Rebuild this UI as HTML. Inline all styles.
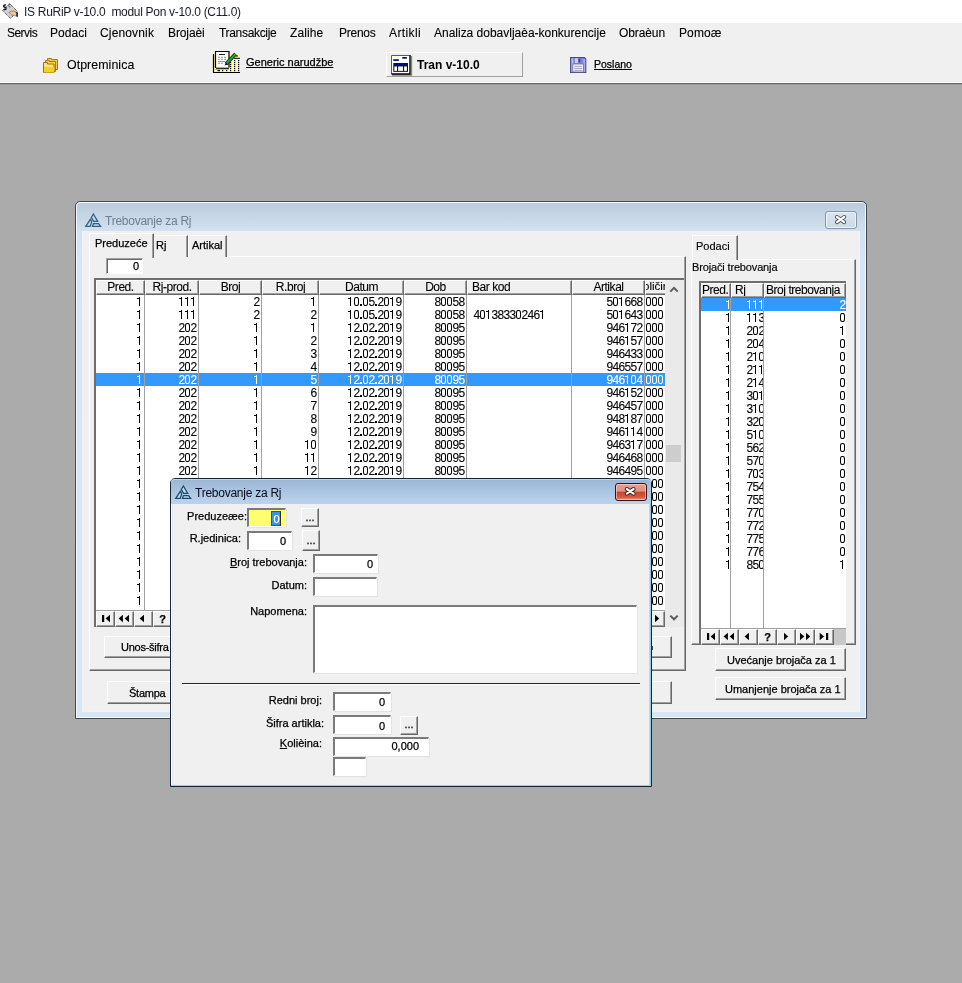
<!DOCTYPE html>
<html><head><meta charset="utf-8"><style>
html,body{margin:0;padding:0;width:962px;height:983px;overflow:hidden;background:#ababab}
body{position:relative;will-change:transform;font-family:"Liberation Sans",sans-serif;color:#000}
div,svg{position:absolute;box-sizing:border-box}
.t{white-space:nowrap;-webkit-text-stroke:0.25px currentColor}
.d{font-size:12px;line-height:11px;-webkit-text-stroke:0.1px currentColor}
.d i{display:inline-block;width:6px;text-align:left;font-style:normal;text-indent:-0.6px}
.d i.o,.d i.p,.d i.z{position:relative;height:9px}
.d i.z::before{content:'';position:absolute;left:0;top:0;width:5px;height:9px;border:1px solid currentColor;border-radius:2px/3px;box-sizing:border-box}
.d i.p{width:3px;height:2px}
.d i.o::before{content:'';position:absolute;left:2px;top:0;width:1px;height:9px;background:currentColor}
.d i.o::after{content:'';position:absolute;left:0;top:1px;width:2px;height:1px;background:currentColor}
.d i.p::before{content:'';position:absolute;left:0;top:0.4px;width:1.6px;height:1.6px;background:currentColor}
</style></head><body>
<div style="left:0px;top:0px;width:962px;height:23px;background:#fff"></div>
<div style="left:0px;top:23px;width:962px;height:59px;background:#f0f0f0"></div>
<div style="left:0px;top:82px;width:962px;height:1px;background:#fff"></div>
<div style="left:0px;top:83px;width:962px;height:1px;background:#6a6a6a"></div>
<div style="left:0px;top:84px;width:962px;height:1px;background:#9a9a9a"></div>
<div style="left:0px;top:85px;width:962px;height:898px;background:#ababab"></div>
<svg style="left:0px;top:0px" width="22" height="22" viewBox="0 0 22 22">
<path d="M9.5 3.5 L17.5 11.5 L10.5 18.5 L2.5 10.5 Z" fill="#cfcfd4" stroke="#404048" stroke-width="1" stroke-dasharray="1.2 0.8"/>
<path d="M6 5 Q4 4.5 3.5 6 Q3.5 7 5 7.3 Q6.3 7.6 6 9 Q5.5 10 3.5 9.5" stroke="#111" stroke-width="1.4" fill="none"/>
<path d="M11 4.5 Q9 4 8.5 5.5 Q8.5 7 10.5 7" stroke="#666" stroke-width="1" fill="none"/>
<path d="M9 12.5 Q11 10.5 14 11 L16 12 L17 16 L13 15.5 Q11 15 9 12.5Z" fill="#e9c9a0" stroke="#8a6a40" stroke-width="0.7"/>
<path d="M16.5 12 L17.8 12.5 L17.8 17 L16.5 16.5Z" fill="#000"/>
<path d="M12 11.5 h3" stroke="#c8a040" stroke-width="1.2"/>
</svg>
<div class="t" style="left:24px;top:6px;font-size:12px;line-height:12px;color:#1a1a2a;letter-spacing:-0.3px;-webkit-text-stroke:0">IS RuRiP v-10.0&nbsp; modul Pon v-10.0 (C11.0)</div>
<div class="t" style="left:7px;top:27px;font-size:12px;line-height:12px;letter-spacing:-0.53px;-webkit-text-stroke:0.1px currentColor">Servis</div>
<div class="t" style="left:50px;top:27px;font-size:12px;line-height:12px;letter-spacing:0.06px;-webkit-text-stroke:0.1px currentColor">Podaci</div>
<div class="t" style="left:100px;top:27px;font-size:12px;line-height:12px;letter-spacing:0.15px;-webkit-text-stroke:0.1px currentColor">Cjenovnik</div>
<div class="t" style="left:168px;top:27px;font-size:12px;line-height:12px;letter-spacing:-0.11px;-webkit-text-stroke:0.1px currentColor">Brojaèi</div>
<div class="t" style="left:219px;top:27px;font-size:12px;line-height:12px;letter-spacing:-0.32px;-webkit-text-stroke:0.1px currentColor">Transakcije</div>
<div class="t" style="left:290px;top:27px;font-size:12px;line-height:12px;letter-spacing:0.10px;-webkit-text-stroke:0.1px currentColor">Zalihe</div>
<div class="t" style="left:339px;top:27px;font-size:12px;line-height:12px;letter-spacing:-0.26px;-webkit-text-stroke:0.1px currentColor">Prenos</div>
<div class="t" style="left:389px;top:27px;font-size:12px;line-height:12px;letter-spacing:0.39px;-webkit-text-stroke:0.1px currentColor">Artikli</div>
<div class="t" style="left:434px;top:27px;font-size:12px;line-height:12px;letter-spacing:-0.01px;-webkit-text-stroke:0.1px currentColor">Analiza dobavljaèa-konkurencije</div>
<div class="t" style="left:619px;top:27px;font-size:12px;line-height:12px;letter-spacing:-0.10px;-webkit-text-stroke:0.1px currentColor">Obraèun</div>
<div class="t" style="left:679px;top:27px;font-size:12px;line-height:12px;letter-spacing:0.10px;-webkit-text-stroke:0.1px currentColor">Pomoæ</div>
<svg style="left:42px;top:57px" width="18" height="17" viewBox="0 0 18 17">
<path d="M5.5 1.5 h4 v1 h6 v10 h-10 z" fill="#f7c948" stroke="#b07810"/>
<path d="M3.5 3.5 h4 v1 h6 v10 h-10 z" fill="#f9d35a" stroke="#b07810"/>
<path d="M1.5 5.5 h4 v1.5 h6.5 v8.5 h-10.5 z" fill="#fbe27a" stroke="#a86c08"/>
<path d="M2 10 h10 v5.5 h-10z" fill="#f2cf2a"/>
</svg>
<div class="t" style="left:67px;top:59px;font-size:12.4px;line-height:12.4px;letter-spacing:0.05px;-webkit-text-stroke:0.1px currentColor">Otpreminica</div>
<svg style="left:205px;top:45px" width="40" height="35" viewBox="0 0 40 35">
<path d="M8 9 H35 V28 H8 Z" fill="#fff9a0"/>
<path d="M8.5 9 V27.5 H35" stroke="#000" stroke-width="1.2" fill="none"/>
<path d="M29 13.3 H35" stroke="#000" stroke-width="1"/>
<path d="M31 11 H33" stroke="#000" stroke-width="1"/>
<g fill="#000"><rect x="25.0" y="15.0" width="1.2" height="1.2"/><rect x="25.0" y="17.0" width="1.2" height="1.2"/><rect x="25.0" y="19.0" width="1.2" height="1.2"/><rect x="25.0" y="21.0" width="1.2" height="1.2"/><rect x="25.0" y="23.0" width="1.2" height="1.2"/><rect x="25.0" y="25.0" width="1.2" height="1.2"/><rect x="29.0" y="15.0" width="1.2" height="1.2"/><rect x="29.0" y="17.0" width="1.2" height="1.2"/><rect x="29.0" y="19.0" width="1.2" height="1.2"/><rect x="29.0" y="21.0" width="1.2" height="1.2"/><rect x="29.0" y="23.0" width="1.2" height="1.2"/><rect x="29.0" y="25.0" width="1.2" height="1.2"/><rect x="33.0" y="15.0" width="1.2" height="1.2"/><rect x="33.0" y="17.0" width="1.2" height="1.2"/><rect x="33.0" y="19.0" width="1.2" height="1.2"/><rect x="33.0" y="21.0" width="1.2" height="1.2"/><rect x="33.0" y="23.0" width="1.2" height="1.2"/><rect x="33.0" y="25.0" width="1.2" height="1.2"/><rect x="17.0" y="25.0" width="1.2" height="1.2"/><rect x="21.0" y="25.0" width="1.2" height="1.2"/><rect x="12.5" y="25" width="2.5" height="1.2"/></g>
<rect x="10.5" y="6.5" width="13" height="16" fill="#fff"/>
<path d="M10.5 23 V6.5 H24 V22.5" stroke="#000" stroke-width="1.2" fill="none"/>
<path d="M11 23.3 H24" stroke="#222" stroke-width="1.3"/>
<path d="M10 24.5 H24" stroke="#bbb" stroke-width="1"/>
<path d="M14 9.5 H20" stroke="#222" stroke-width="1"/>
<path d="M13 12.3 h2 M16 12.3 h2 M19 12.3 h2 M13 14.3 h2 M16 14.3 h2 M19 14.3 h2 M13 16.5 h7 M13 18.3 h2 M16 18.3 h2" stroke="#888" stroke-width="0.9"/>
<path d="M21 19 L30.5 9" stroke="#111" stroke-width="3.6"/>
<path d="M21.5 18.5 L30.5 9" stroke="#2aa040" stroke-width="2.2"/>
<path d="M19.5 20.5 L21 18 L22.5 19.5Z" fill="#000"/>
</svg>
<div class="t" style="left:246px;top:57px;font-size:11px;line-height:11px;text-decoration:underline">Generic narudžbe</div>
<div style="left:386px;top:52px;width:137px;height:25px;background:#f0f0f0;border-top:1px solid #fff;border-left:1px solid #fff;border-right:1px solid #a0a0a0;border-bottom:1px solid #a0a0a0"></div>
<svg style="left:386px;top:50px" width="30" height="28" viewBox="0 0 30 28">
<path d="M6 25 H25.5 V6" stroke="#8a8080" stroke-width="1.3" fill="none"/>
<rect x="5.5" y="5.5" width="18.5" height="18.5" fill="#fff"/>
<path d="M5.5 24 V5.5 H23.5" stroke="#5a5a5a" stroke-width="1" fill="none"/>
<path d="M24 5 V24 H5.5" stroke="#000" stroke-width="1.4" fill="none"/>
<rect x="7.3" y="9.2" width="5.5" height="1.7" fill="#000a60"/>
<rect x="16.3" y="7" width="4.5" height="1.7" fill="#000a60"/>
<rect x="7.3" y="13" width="14.7" height="3" fill="#000a80"/>
<rect x="7.3" y="16" width="14.7" height="5.8" fill="#000"/>
<rect x="8.3" y="16.4" width="2.8" height="4.5" fill="#fff"/>
<rect x="12.1" y="16.4" width="5" height="4.5" fill="#f4f0f0"/>
<rect x="18.1" y="16.4" width="2.8" height="4.5" fill="#fff"/>
</svg>
<div class="t" style="left:417px;top:59px;font-size:12px;line-height:12px;font-weight:bold;-webkit-text-stroke:0">Tran v-10.0</div>
<svg style="left:566px;top:54px" width="24" height="22" viewBox="0 0 24 22">
<path d="M4.6 3.6 H18.3 L19.8 5 V18.5 H4.6 Z" fill="#8c92e0" stroke="#4a4a80" stroke-width="1.1"/>
<rect x="5.5" y="4.3" width="1.6" height="13.5" fill="#b8bcf4"/>
<rect x="17.5" y="5" width="1.6" height="13" fill="#a8acf0"/>
<rect x="8.5" y="4.2" width="8" height="5.2" fill="#7a80d8"/>
<rect x="9" y="4.2" width="3" height="4.8" fill="#c8ccf8"/>
<rect x="12.6" y="4.8" width="1.6" height="3.6" fill="#3a40a0"/>
<rect x="6.8" y="10" width="10.7" height="8" fill="#f4f4fc" stroke="#6a6a98" stroke-width="0.8"/>
<path d="M8.2 12.3 H16.2 M8.2 14.4 H16.2 M8.2 16.4 H16.2" stroke="#9a9ab0" stroke-width="0.9"/>
</svg>
<div class="t" style="left:594px;top:59px;font-size:10.5px;line-height:10.5px;text-decoration:underline">Poslano</div>
<div style="left:75px;top:201px;width:792px;height:518px;border:1px solid #404850;border-radius:5px 5px 0 0;background:linear-gradient(#b9cbdc 0px,#c0d1e1 8px,#d4e2f0 30px,#d8e5f2 60px,#d9e6f3 100%);box-shadow:inset 1px 1px 0 #f4f8fc,inset -1px -1px 0 #f4f8fc"></div>
<div style="left:83px;top:232px;width:776px;height:479px;background:#f0f0f0;box-shadow:0 0 0 1px #eef3f9"></div>
<svg style="left:82px;top:210px;opacity:0.85" width="22" height="20" viewBox="0 0 22 20">
<g fill="#b4def6" stroke="#1d4a6b" stroke-width="1.25" stroke-linejoin="miter">
<path d="M11.4 4 L15.7 11.4 L11.6 11.4 L9.3 7.4 Z"/>
<path d="M8.4 9.3 L9.7 11.9 L8.2 16.4 L3.7 16.4 Z"/>
<path d="M11.4 13.6 L16.6 13.6 L18.7 16.4 L10.4 16.4 Z"/>
</g>
</svg>
<div class="t" style="left:105px;top:215px;font-size:12px;line-height:12px;color:#6e7f92;letter-spacing:-0.25px;-webkit-text-stroke:0">Trebovanje za Rj</div>
<div style="left:825px;top:211px;width:32px;height:18px;border:1px solid #8795a8;border-radius:3px;background:linear-gradient(#dbe5f0,#cdd9e6);box-shadow:inset 0 0 0 1px #eef3f8"></div>
<svg style="left:833px;top:213px" width="16" height="13" viewBox="0 0 16 13">
<path d="M4 4 L11.2 9.2 M11.2 4 L4 9.2" stroke="#404854" stroke-width="4" stroke-linecap="round"/>
<path d="M4 4 L11.2 9.2 M11.2 4 L4 9.2" stroke="#fff" stroke-width="2.2" stroke-linecap="round"/>
</svg>
<div style="left:89px;top:256px;width:597px;height:415px;background:#f0f0f0;border-top:1px solid #fff;border-left:1px solid #fff;border-right:1px solid #696969;border-bottom:1px solid #696969;box-shadow:inset -1px -1px 0 #a0a0a0"></div>
<div style="left:153px;top:235px;width:35px;height:22px;background:#f0f0f0;border-top:1px solid #fff;border-right:1px solid #696969;box-shadow:inset -1px 0 0 #a0a0a0"></div>
<div style="left:188px;top:235px;width:39px;height:22px;background:#f0f0f0;border-top:1px solid #fff;border-left:1px solid #fff;border-right:1px solid #696969;box-shadow:inset -1px 0 0 #a0a0a0"></div>
<div style="left:89px;top:233px;width:65px;height:25px;background:#f0f0f0;border-top:1px solid #fff;border-left:1px solid #fff;border-right:1px solid #696969;box-shadow:inset -1px 0 0 #a0a0a0"></div>
<div class="t" style="left:95px;top:238px;font-size:11px;line-height:11px;">Preduzeće</div>
<div class="t" style="left:156px;top:240px;font-size:11px;line-height:11px;">Rj</div>
<div class="t" style="left:192px;top:240px;font-size:11px;line-height:11px;">Artikal</div>
<div style="left:106px;top:258px;width:37px;height:16px;background:#fff;border-top:1px solid #a0a0a0;border-left:1px solid #a0a0a0;border-right:1px solid #fff;border-bottom:1px solid #fff;box-shadow:inset 1px 1px 0 #696969"></div>
<div class="t" style="left:106px;top:261px;width:33px;text-align:right;font-size:11px;line-height:11px;">0</div>
<div style="left:94px;top:278px;width:590px;height:349px;background:#fff;border-top:2px solid #6e6e6e;border-left:2px solid #6e6e6e"></div>
<div style="left:96px;top:280px;width:49px;height:15px;background:#f0f0f0;border-top:1px solid #fff;border-left:1px solid #fff;border-bottom:1px solid #696969;border-right:1px solid #696969;box-shadow:inset -1px -1px 0 #a0a0a0"></div>
<div class="t" style="left:96px;top:281px;width:49px;text-align:center;font-size:12px;line-height:12px;overflow:hidden;white-space:nowrap;letter-spacing:-0.45px;-webkit-text-stroke:0.1px currentColor">Pred.</div>
<div style="left:145px;top:280px;width:54px;height:15px;background:#f0f0f0;border-top:1px solid #fff;border-left:1px solid #fff;border-bottom:1px solid #696969;border-right:1px solid #696969;box-shadow:inset -1px -1px 0 #a0a0a0"></div>
<div class="t" style="left:145px;top:281px;width:54px;text-align:center;font-size:12px;line-height:12px;overflow:hidden;white-space:nowrap;letter-spacing:-0.45px;-webkit-text-stroke:0.1px currentColor">Rj-prod.</div>
<div style="left:199px;top:280px;width:63px;height:15px;background:#f0f0f0;border-top:1px solid #fff;border-left:1px solid #fff;border-bottom:1px solid #696969;border-right:1px solid #696969;box-shadow:inset -1px -1px 0 #a0a0a0"></div>
<div class="t" style="left:199px;top:281px;width:63px;text-align:center;font-size:12px;line-height:12px;overflow:hidden;white-space:nowrap;letter-spacing:-0.45px;-webkit-text-stroke:0.1px currentColor">Broj</div>
<div style="left:262px;top:280px;width:57px;height:15px;background:#f0f0f0;border-top:1px solid #fff;border-left:1px solid #fff;border-bottom:1px solid #696969;border-right:1px solid #696969;box-shadow:inset -1px -1px 0 #a0a0a0"></div>
<div class="t" style="left:262px;top:281px;width:57px;text-align:center;font-size:12px;line-height:12px;overflow:hidden;white-space:nowrap;letter-spacing:-0.45px;-webkit-text-stroke:0.1px currentColor">R.broj</div>
<div style="left:319px;top:280px;width:85px;height:15px;background:#f0f0f0;border-top:1px solid #fff;border-left:1px solid #fff;border-bottom:1px solid #696969;border-right:1px solid #696969;box-shadow:inset -1px -1px 0 #a0a0a0"></div>
<div class="t" style="left:319px;top:281px;width:85px;text-align:center;font-size:12px;line-height:12px;overflow:hidden;white-space:nowrap;letter-spacing:-0.45px;-webkit-text-stroke:0.1px currentColor">Datum</div>
<div style="left:404px;top:280px;width:63px;height:15px;background:#f0f0f0;border-top:1px solid #fff;border-left:1px solid #fff;border-bottom:1px solid #696969;border-right:1px solid #696969;box-shadow:inset -1px -1px 0 #a0a0a0"></div>
<div class="t" style="left:404px;top:281px;width:63px;text-align:center;font-size:12px;line-height:12px;overflow:hidden;white-space:nowrap;letter-spacing:-0.45px;-webkit-text-stroke:0.1px currentColor">Dob</div>
<div style="left:467px;top:280px;width:105px;height:15px;background:#f0f0f0;border-top:1px solid #fff;border-left:1px solid #fff;border-bottom:1px solid #696969;border-right:1px solid #696969;box-shadow:inset -1px -1px 0 #a0a0a0"></div>
<div class="t" style="left:472px;top:281px;width:99px;font-size:12px;line-height:12px;overflow:hidden;white-space:nowrap;letter-spacing:-0.45px;-webkit-text-stroke:0.1px currentColor">Bar kod</div>
<div style="left:572px;top:280px;width:73px;height:15px;background:#f0f0f0;border-top:1px solid #fff;border-left:1px solid #fff;border-bottom:1px solid #696969;border-right:1px solid #696969;box-shadow:inset -1px -1px 0 #a0a0a0"></div>
<div class="t" style="left:572px;top:281px;width:73px;text-align:center;font-size:12px;line-height:12px;overflow:hidden;white-space:nowrap;letter-spacing:-0.45px;-webkit-text-stroke:0.1px currentColor">Artikal</div>
<div style="left:645px;top:280px;width:20px;height:15px;background:#f0f0f0;border-top:1px solid #fff;border-left:1px solid #fff;border-bottom:1px solid #696969;box-shadow:inset 0 -1px 0 #a0a0a0"></div>
<div class="t" style="left:646px;top:281px;width:19px;height:12px;overflow:hidden;font-size:11.5px;line-height:11px;-webkit-text-stroke:0.1px currentColor"><span style="position:absolute;left:-3px;top:0">oličin</span></div>
<div style="left:665px;top:280px;width:19px;height:347px;background:#eaeaea"></div>
<svg style="left:668px;top:285px" width="12" height="9" viewBox="0 0 12 9"><path d="M2.3 6.6 L6 2.9 L9.7 6.6" stroke="#5a5a5a" stroke-width="2" fill="none"/></svg>
<div style="left:666px;top:445px;width:15px;height:17px;background:#cdcdcd"></div>
<svg style="left:668px;top:613px" width="12" height="9" viewBox="0 0 12 9"><path d="M2.3 2.6 L6 6.3 L9.7 2.6" stroke="#5a5a5a" stroke-width="2" fill="none"/></svg>
<div style="left:96px;top:295px;width:569px;height:315px;overflow:hidden">
<div class="t d" style="left:0px;top:2px;width:47px;text-align:right;color:#000"><i class="o"></i></div>
<div class="t d" style="left:49px;top:2px;width:52px;text-align:right;color:#000"><i class="o"></i><i class="o"></i><i class="o"></i></div>
<div class="t d" style="left:103px;top:2px;width:61px;text-align:right;color:#000"><i>2</i></div>
<div class="t d" style="left:166px;top:2px;width:55px;text-align:right;color:#000"><i class="o"></i></div>
<div class="t d" style="left:223px;top:2px;width:83px;text-align:right;color:#000"><i class="o"></i><i class="z"></i><i class="p"></i><i class="z"></i><i>5</i><i class="p"></i><i>2</i><i class="z"></i><i class="o"></i><i>9</i></div>
<div class="t d" style="left:308px;top:2px;width:61px;text-align:right;color:#000"><i>8</i><i class="z"></i><i class="z"></i><i>5</i><i>8</i></div>
<div class="t d" style="left:476px;top:2px;width:71px;text-align:right;color:#000"><i>5</i><i class="z"></i><i class="o"></i><i>6</i><i>6</i><i>8</i></div>
<div class="t d" style="left:550px;top:2px;color:#000"><i class="z"></i><i class="z"></i><i class="z"></i></div>
<div class="t d" style="left:0px;top:15px;width:47px;text-align:right;color:#000"><i class="o"></i></div>
<div class="t d" style="left:49px;top:15px;width:52px;text-align:right;color:#000"><i class="o"></i><i class="o"></i><i class="o"></i></div>
<div class="t d" style="left:103px;top:15px;width:61px;text-align:right;color:#000"><i>2</i></div>
<div class="t d" style="left:166px;top:15px;width:55px;text-align:right;color:#000"><i>2</i></div>
<div class="t d" style="left:223px;top:15px;width:83px;text-align:right;color:#000"><i class="o"></i><i class="z"></i><i class="p"></i><i class="z"></i><i>5</i><i class="p"></i><i>2</i><i class="z"></i><i class="o"></i><i>9</i></div>
<div class="t d" style="left:308px;top:15px;width:61px;text-align:right;color:#000"><i>8</i><i class="z"></i><i class="z"></i><i>5</i><i>8</i></div>
<div class="t d" style="left:378px;top:15px;color:#000"><i>4</i><i class="z"></i><i class="o"></i><i>3</i><i>8</i><i>3</i><i>3</i><i class="z"></i><i>2</i><i>4</i><i>6</i><i class="o"></i></div>
<div class="t d" style="left:476px;top:15px;width:71px;text-align:right;color:#000"><i>5</i><i class="z"></i><i class="o"></i><i>6</i><i>4</i><i>3</i></div>
<div class="t d" style="left:550px;top:15px;color:#000"><i class="z"></i><i class="z"></i><i class="z"></i></div>
<div class="t d" style="left:0px;top:28px;width:47px;text-align:right;color:#000"><i class="o"></i></div>
<div class="t d" style="left:49px;top:28px;width:52px;text-align:right;color:#000"><i>2</i><i class="z"></i><i>2</i></div>
<div class="t d" style="left:103px;top:28px;width:61px;text-align:right;color:#000"><i class="o"></i></div>
<div class="t d" style="left:166px;top:28px;width:55px;text-align:right;color:#000"><i class="o"></i></div>
<div class="t d" style="left:223px;top:28px;width:83px;text-align:right;color:#000"><i class="o"></i><i>2</i><i class="p"></i><i class="z"></i><i>2</i><i class="p"></i><i>2</i><i class="z"></i><i class="o"></i><i>9</i></div>
<div class="t d" style="left:308px;top:28px;width:61px;text-align:right;color:#000"><i>8</i><i class="z"></i><i class="z"></i><i>9</i><i>5</i></div>
<div class="t d" style="left:476px;top:28px;width:71px;text-align:right;color:#000"><i>9</i><i>4</i><i>6</i><i class="o"></i><i>7</i><i>2</i></div>
<div class="t d" style="left:550px;top:28px;color:#000"><i class="z"></i><i class="z"></i><i class="z"></i></div>
<div class="t d" style="left:0px;top:41px;width:47px;text-align:right;color:#000"><i class="o"></i></div>
<div class="t d" style="left:49px;top:41px;width:52px;text-align:right;color:#000"><i>2</i><i class="z"></i><i>2</i></div>
<div class="t d" style="left:103px;top:41px;width:61px;text-align:right;color:#000"><i class="o"></i></div>
<div class="t d" style="left:166px;top:41px;width:55px;text-align:right;color:#000"><i>2</i></div>
<div class="t d" style="left:223px;top:41px;width:83px;text-align:right;color:#000"><i class="o"></i><i>2</i><i class="p"></i><i class="z"></i><i>2</i><i class="p"></i><i>2</i><i class="z"></i><i class="o"></i><i>9</i></div>
<div class="t d" style="left:308px;top:41px;width:61px;text-align:right;color:#000"><i>8</i><i class="z"></i><i class="z"></i><i>9</i><i>5</i></div>
<div class="t d" style="left:476px;top:41px;width:71px;text-align:right;color:#000"><i>9</i><i>4</i><i>6</i><i class="o"></i><i>5</i><i>7</i></div>
<div class="t d" style="left:550px;top:41px;color:#000"><i class="z"></i><i class="z"></i><i class="z"></i></div>
<div class="t d" style="left:0px;top:54px;width:47px;text-align:right;color:#000"><i class="o"></i></div>
<div class="t d" style="left:49px;top:54px;width:52px;text-align:right;color:#000"><i>2</i><i class="z"></i><i>2</i></div>
<div class="t d" style="left:103px;top:54px;width:61px;text-align:right;color:#000"><i class="o"></i></div>
<div class="t d" style="left:166px;top:54px;width:55px;text-align:right;color:#000"><i>3</i></div>
<div class="t d" style="left:223px;top:54px;width:83px;text-align:right;color:#000"><i class="o"></i><i>2</i><i class="p"></i><i class="z"></i><i>2</i><i class="p"></i><i>2</i><i class="z"></i><i class="o"></i><i>9</i></div>
<div class="t d" style="left:308px;top:54px;width:61px;text-align:right;color:#000"><i>8</i><i class="z"></i><i class="z"></i><i>9</i><i>5</i></div>
<div class="t d" style="left:476px;top:54px;width:71px;text-align:right;color:#000"><i>9</i><i>4</i><i>6</i><i>4</i><i>3</i><i>3</i></div>
<div class="t d" style="left:550px;top:54px;color:#000"><i class="z"></i><i class="z"></i><i class="z"></i></div>
<div class="t d" style="left:0px;top:67px;width:47px;text-align:right;color:#000"><i class="o"></i></div>
<div class="t d" style="left:49px;top:67px;width:52px;text-align:right;color:#000"><i>2</i><i class="z"></i><i>2</i></div>
<div class="t d" style="left:103px;top:67px;width:61px;text-align:right;color:#000"><i class="o"></i></div>
<div class="t d" style="left:166px;top:67px;width:55px;text-align:right;color:#000"><i>4</i></div>
<div class="t d" style="left:223px;top:67px;width:83px;text-align:right;color:#000"><i class="o"></i><i>2</i><i class="p"></i><i class="z"></i><i>2</i><i class="p"></i><i>2</i><i class="z"></i><i class="o"></i><i>9</i></div>
<div class="t d" style="left:308px;top:67px;width:61px;text-align:right;color:#000"><i>8</i><i class="z"></i><i class="z"></i><i>9</i><i>5</i></div>
<div class="t d" style="left:476px;top:67px;width:71px;text-align:right;color:#000"><i>9</i><i>4</i><i>6</i><i>5</i><i>5</i><i>7</i></div>
<div class="t d" style="left:550px;top:67px;color:#000"><i class="z"></i><i class="z"></i><i class="z"></i></div>
<div style="left:0;top:78px;width:569px;height:13px;background:#3399ff"></div>
<div class="t d" style="left:0px;top:80px;width:47px;text-align:right;color:#fff"><i class="o"></i></div>
<div class="t d" style="left:49px;top:80px;width:52px;text-align:right;color:#fff"><i>2</i><i class="z"></i><i>2</i></div>
<div class="t d" style="left:103px;top:80px;width:61px;text-align:right;color:#fff"><i class="o"></i></div>
<div class="t d" style="left:166px;top:80px;width:55px;text-align:right;color:#fff"><i>5</i></div>
<div class="t d" style="left:223px;top:80px;width:83px;text-align:right;color:#fff"><i class="o"></i><i>2</i><i class="p"></i><i class="z"></i><i>2</i><i class="p"></i><i>2</i><i class="z"></i><i class="o"></i><i>9</i></div>
<div class="t d" style="left:308px;top:80px;width:61px;text-align:right;color:#fff"><i>8</i><i class="z"></i><i class="z"></i><i>9</i><i>5</i></div>
<div class="t d" style="left:476px;top:80px;width:71px;text-align:right;color:#fff"><i>9</i><i>4</i><i>6</i><i class="o"></i><i class="z"></i><i>4</i></div>
<div class="t d" style="left:550px;top:80px;color:#fff"><i class="z"></i><i class="z"></i><i class="z"></i></div>
<div class="t d" style="left:0px;top:93px;width:47px;text-align:right;color:#000"><i class="o"></i></div>
<div class="t d" style="left:49px;top:93px;width:52px;text-align:right;color:#000"><i>2</i><i class="z"></i><i>2</i></div>
<div class="t d" style="left:103px;top:93px;width:61px;text-align:right;color:#000"><i class="o"></i></div>
<div class="t d" style="left:166px;top:93px;width:55px;text-align:right;color:#000"><i>6</i></div>
<div class="t d" style="left:223px;top:93px;width:83px;text-align:right;color:#000"><i class="o"></i><i>2</i><i class="p"></i><i class="z"></i><i>2</i><i class="p"></i><i>2</i><i class="z"></i><i class="o"></i><i>9</i></div>
<div class="t d" style="left:308px;top:93px;width:61px;text-align:right;color:#000"><i>8</i><i class="z"></i><i class="z"></i><i>9</i><i>5</i></div>
<div class="t d" style="left:476px;top:93px;width:71px;text-align:right;color:#000"><i>9</i><i>4</i><i>6</i><i class="o"></i><i>5</i><i>2</i></div>
<div class="t d" style="left:550px;top:93px;color:#000"><i class="z"></i><i class="z"></i><i class="z"></i></div>
<div class="t d" style="left:0px;top:106px;width:47px;text-align:right;color:#000"><i class="o"></i></div>
<div class="t d" style="left:49px;top:106px;width:52px;text-align:right;color:#000"><i>2</i><i class="z"></i><i>2</i></div>
<div class="t d" style="left:103px;top:106px;width:61px;text-align:right;color:#000"><i class="o"></i></div>
<div class="t d" style="left:166px;top:106px;width:55px;text-align:right;color:#000"><i>7</i></div>
<div class="t d" style="left:223px;top:106px;width:83px;text-align:right;color:#000"><i class="o"></i><i>2</i><i class="p"></i><i class="z"></i><i>2</i><i class="p"></i><i>2</i><i class="z"></i><i class="o"></i><i>9</i></div>
<div class="t d" style="left:308px;top:106px;width:61px;text-align:right;color:#000"><i>8</i><i class="z"></i><i class="z"></i><i>9</i><i>5</i></div>
<div class="t d" style="left:476px;top:106px;width:71px;text-align:right;color:#000"><i>9</i><i>4</i><i>6</i><i>4</i><i>5</i><i>7</i></div>
<div class="t d" style="left:550px;top:106px;color:#000"><i class="z"></i><i class="z"></i><i class="z"></i></div>
<div class="t d" style="left:0px;top:119px;width:47px;text-align:right;color:#000"><i class="o"></i></div>
<div class="t d" style="left:49px;top:119px;width:52px;text-align:right;color:#000"><i>2</i><i class="z"></i><i>2</i></div>
<div class="t d" style="left:103px;top:119px;width:61px;text-align:right;color:#000"><i class="o"></i></div>
<div class="t d" style="left:166px;top:119px;width:55px;text-align:right;color:#000"><i>8</i></div>
<div class="t d" style="left:223px;top:119px;width:83px;text-align:right;color:#000"><i class="o"></i><i>2</i><i class="p"></i><i class="z"></i><i>2</i><i class="p"></i><i>2</i><i class="z"></i><i class="o"></i><i>9</i></div>
<div class="t d" style="left:308px;top:119px;width:61px;text-align:right;color:#000"><i>8</i><i class="z"></i><i class="z"></i><i>9</i><i>5</i></div>
<div class="t d" style="left:476px;top:119px;width:71px;text-align:right;color:#000"><i>9</i><i>4</i><i>8</i><i class="o"></i><i>8</i><i>7</i></div>
<div class="t d" style="left:550px;top:119px;color:#000"><i class="z"></i><i class="z"></i><i class="z"></i></div>
<div class="t d" style="left:0px;top:132px;width:47px;text-align:right;color:#000"><i class="o"></i></div>
<div class="t d" style="left:49px;top:132px;width:52px;text-align:right;color:#000"><i>2</i><i class="z"></i><i>2</i></div>
<div class="t d" style="left:103px;top:132px;width:61px;text-align:right;color:#000"><i class="o"></i></div>
<div class="t d" style="left:166px;top:132px;width:55px;text-align:right;color:#000"><i>9</i></div>
<div class="t d" style="left:223px;top:132px;width:83px;text-align:right;color:#000"><i class="o"></i><i>2</i><i class="p"></i><i class="z"></i><i>2</i><i class="p"></i><i>2</i><i class="z"></i><i class="o"></i><i>9</i></div>
<div class="t d" style="left:308px;top:132px;width:61px;text-align:right;color:#000"><i>8</i><i class="z"></i><i class="z"></i><i>9</i><i>5</i></div>
<div class="t d" style="left:476px;top:132px;width:71px;text-align:right;color:#000"><i>9</i><i>4</i><i>6</i><i class="o"></i><i class="o"></i><i>4</i></div>
<div class="t d" style="left:550px;top:132px;color:#000"><i class="z"></i><i class="z"></i><i class="z"></i></div>
<div class="t d" style="left:0px;top:145px;width:47px;text-align:right;color:#000"><i class="o"></i></div>
<div class="t d" style="left:49px;top:145px;width:52px;text-align:right;color:#000"><i>2</i><i class="z"></i><i>2</i></div>
<div class="t d" style="left:103px;top:145px;width:61px;text-align:right;color:#000"><i class="o"></i></div>
<div class="t d" style="left:166px;top:145px;width:55px;text-align:right;color:#000"><i class="o"></i><i class="z"></i></div>
<div class="t d" style="left:223px;top:145px;width:83px;text-align:right;color:#000"><i class="o"></i><i>2</i><i class="p"></i><i class="z"></i><i>2</i><i class="p"></i><i>2</i><i class="z"></i><i class="o"></i><i>9</i></div>
<div class="t d" style="left:308px;top:145px;width:61px;text-align:right;color:#000"><i>8</i><i class="z"></i><i class="z"></i><i>9</i><i>5</i></div>
<div class="t d" style="left:476px;top:145px;width:71px;text-align:right;color:#000"><i>9</i><i>4</i><i>6</i><i>3</i><i class="o"></i><i>7</i></div>
<div class="t d" style="left:550px;top:145px;color:#000"><i class="z"></i><i class="z"></i><i class="z"></i></div>
<div class="t d" style="left:0px;top:158px;width:47px;text-align:right;color:#000"><i class="o"></i></div>
<div class="t d" style="left:49px;top:158px;width:52px;text-align:right;color:#000"><i>2</i><i class="z"></i><i>2</i></div>
<div class="t d" style="left:103px;top:158px;width:61px;text-align:right;color:#000"><i class="o"></i></div>
<div class="t d" style="left:166px;top:158px;width:55px;text-align:right;color:#000"><i class="o"></i><i class="o"></i></div>
<div class="t d" style="left:223px;top:158px;width:83px;text-align:right;color:#000"><i class="o"></i><i>2</i><i class="p"></i><i class="z"></i><i>2</i><i class="p"></i><i>2</i><i class="z"></i><i class="o"></i><i>9</i></div>
<div class="t d" style="left:308px;top:158px;width:61px;text-align:right;color:#000"><i>8</i><i class="z"></i><i class="z"></i><i>9</i><i>5</i></div>
<div class="t d" style="left:476px;top:158px;width:71px;text-align:right;color:#000"><i>9</i><i>4</i><i>6</i><i>4</i><i>6</i><i>8</i></div>
<div class="t d" style="left:550px;top:158px;color:#000"><i class="z"></i><i class="z"></i><i class="z"></i></div>
<div class="t d" style="left:0px;top:171px;width:47px;text-align:right;color:#000"><i class="o"></i></div>
<div class="t d" style="left:49px;top:171px;width:52px;text-align:right;color:#000"><i>2</i><i class="z"></i><i>2</i></div>
<div class="t d" style="left:103px;top:171px;width:61px;text-align:right;color:#000"><i class="o"></i></div>
<div class="t d" style="left:166px;top:171px;width:55px;text-align:right;color:#000"><i class="o"></i><i>2</i></div>
<div class="t d" style="left:223px;top:171px;width:83px;text-align:right;color:#000"><i class="o"></i><i>2</i><i class="p"></i><i class="z"></i><i>2</i><i class="p"></i><i>2</i><i class="z"></i><i class="o"></i><i>9</i></div>
<div class="t d" style="left:308px;top:171px;width:61px;text-align:right;color:#000"><i>8</i><i class="z"></i><i class="z"></i><i>9</i><i>5</i></div>
<div class="t d" style="left:476px;top:171px;width:71px;text-align:right;color:#000"><i>9</i><i>4</i><i>6</i><i>4</i><i>9</i><i>5</i></div>
<div class="t d" style="left:550px;top:171px;color:#000"><i class="z"></i><i class="z"></i><i class="z"></i></div>
<div class="t d" style="left:0px;top:184px;width:47px;text-align:right;color:#000"><i class="o"></i></div>
<div class="t d" style="left:49px;top:184px;width:52px;text-align:right;color:#000"><i>2</i><i class="z"></i><i>2</i></div>
<div class="t d" style="left:103px;top:184px;width:61px;text-align:right;color:#000"><i class="o"></i></div>
<div class="t d" style="left:166px;top:184px;width:55px;text-align:right;color:#000"><i class="o"></i><i>3</i></div>
<div class="t d" style="left:223px;top:184px;width:83px;text-align:right;color:#000"><i class="o"></i><i>2</i><i class="p"></i><i class="z"></i><i>2</i><i class="p"></i><i>2</i><i class="z"></i><i class="o"></i><i>9</i></div>
<div class="t d" style="left:308px;top:184px;width:61px;text-align:right;color:#000"><i>8</i><i class="z"></i><i class="z"></i><i>9</i><i>5</i></div>
<div class="t d" style="left:476px;top:184px;width:71px;text-align:right;color:#000"><i>9</i><i>4</i><i>6</i><i>4</i><i class="z"></i><i class="z"></i></div>
<div class="t d" style="left:550px;top:184px;color:#000"><i class="z"></i><i class="z"></i><i class="z"></i></div>
<div class="t d" style="left:0px;top:197px;width:47px;text-align:right;color:#000"><i class="o"></i></div>
<div class="t d" style="left:49px;top:197px;width:52px;text-align:right;color:#000"><i>2</i><i class="z"></i><i>2</i></div>
<div class="t d" style="left:103px;top:197px;width:61px;text-align:right;color:#000"><i class="o"></i></div>
<div class="t d" style="left:166px;top:197px;width:55px;text-align:right;color:#000"><i class="o"></i><i>4</i></div>
<div class="t d" style="left:223px;top:197px;width:83px;text-align:right;color:#000"><i class="o"></i><i>2</i><i class="p"></i><i class="z"></i><i>2</i><i class="p"></i><i>2</i><i class="z"></i><i class="o"></i><i>9</i></div>
<div class="t d" style="left:308px;top:197px;width:61px;text-align:right;color:#000"><i>8</i><i class="z"></i><i class="z"></i><i>9</i><i>5</i></div>
<div class="t d" style="left:476px;top:197px;width:71px;text-align:right;color:#000"><i>9</i><i>4</i><i>6</i><i>4</i><i class="z"></i><i class="o"></i></div>
<div class="t d" style="left:550px;top:197px;color:#000"><i class="z"></i><i class="z"></i><i class="z"></i></div>
<div class="t d" style="left:0px;top:210px;width:47px;text-align:right;color:#000"><i class="o"></i></div>
<div class="t d" style="left:49px;top:210px;width:52px;text-align:right;color:#000"><i>2</i><i class="z"></i><i>2</i></div>
<div class="t d" style="left:103px;top:210px;width:61px;text-align:right;color:#000"><i class="o"></i></div>
<div class="t d" style="left:166px;top:210px;width:55px;text-align:right;color:#000"><i class="o"></i><i>5</i></div>
<div class="t d" style="left:223px;top:210px;width:83px;text-align:right;color:#000"><i class="o"></i><i>2</i><i class="p"></i><i class="z"></i><i>2</i><i class="p"></i><i>2</i><i class="z"></i><i class="o"></i><i>9</i></div>
<div class="t d" style="left:308px;top:210px;width:61px;text-align:right;color:#000"><i>8</i><i class="z"></i><i class="z"></i><i>9</i><i>5</i></div>
<div class="t d" style="left:476px;top:210px;width:71px;text-align:right;color:#000"><i>9</i><i>4</i><i>6</i><i>4</i><i class="z"></i><i>2</i></div>
<div class="t d" style="left:550px;top:210px;color:#000"><i class="z"></i><i class="z"></i><i class="z"></i></div>
<div class="t d" style="left:0px;top:223px;width:47px;text-align:right;color:#000"><i class="o"></i></div>
<div class="t d" style="left:49px;top:223px;width:52px;text-align:right;color:#000"><i>2</i><i class="z"></i><i>2</i></div>
<div class="t d" style="left:103px;top:223px;width:61px;text-align:right;color:#000"><i class="o"></i></div>
<div class="t d" style="left:166px;top:223px;width:55px;text-align:right;color:#000"><i class="o"></i><i>6</i></div>
<div class="t d" style="left:223px;top:223px;width:83px;text-align:right;color:#000"><i class="o"></i><i>2</i><i class="p"></i><i class="z"></i><i>2</i><i class="p"></i><i>2</i><i class="z"></i><i class="o"></i><i>9</i></div>
<div class="t d" style="left:308px;top:223px;width:61px;text-align:right;color:#000"><i>8</i><i class="z"></i><i class="z"></i><i>9</i><i>5</i></div>
<div class="t d" style="left:476px;top:223px;width:71px;text-align:right;color:#000"><i>9</i><i>4</i><i>6</i><i>4</i><i class="z"></i><i>3</i></div>
<div class="t d" style="left:550px;top:223px;color:#000"><i class="z"></i><i class="z"></i><i class="z"></i></div>
<div class="t d" style="left:0px;top:236px;width:47px;text-align:right;color:#000"><i class="o"></i></div>
<div class="t d" style="left:49px;top:236px;width:52px;text-align:right;color:#000"><i>2</i><i class="z"></i><i>2</i></div>
<div class="t d" style="left:103px;top:236px;width:61px;text-align:right;color:#000"><i class="o"></i></div>
<div class="t d" style="left:166px;top:236px;width:55px;text-align:right;color:#000"><i class="o"></i><i>7</i></div>
<div class="t d" style="left:223px;top:236px;width:83px;text-align:right;color:#000"><i class="o"></i><i>2</i><i class="p"></i><i class="z"></i><i>2</i><i class="p"></i><i>2</i><i class="z"></i><i class="o"></i><i>9</i></div>
<div class="t d" style="left:308px;top:236px;width:61px;text-align:right;color:#000"><i>8</i><i class="z"></i><i class="z"></i><i>9</i><i>5</i></div>
<div class="t d" style="left:476px;top:236px;width:71px;text-align:right;color:#000"><i>9</i><i>4</i><i>6</i><i>4</i><i class="z"></i><i>4</i></div>
<div class="t d" style="left:550px;top:236px;color:#000"><i class="z"></i><i class="z"></i><i class="z"></i></div>
<div class="t d" style="left:0px;top:249px;width:47px;text-align:right;color:#000"><i class="o"></i></div>
<div class="t d" style="left:49px;top:249px;width:52px;text-align:right;color:#000"><i>2</i><i class="z"></i><i>2</i></div>
<div class="t d" style="left:103px;top:249px;width:61px;text-align:right;color:#000"><i class="o"></i></div>
<div class="t d" style="left:166px;top:249px;width:55px;text-align:right;color:#000"><i class="o"></i><i>8</i></div>
<div class="t d" style="left:223px;top:249px;width:83px;text-align:right;color:#000"><i class="o"></i><i>2</i><i class="p"></i><i class="z"></i><i>2</i><i class="p"></i><i>2</i><i class="z"></i><i class="o"></i><i>9</i></div>
<div class="t d" style="left:308px;top:249px;width:61px;text-align:right;color:#000"><i>8</i><i class="z"></i><i class="z"></i><i>9</i><i>5</i></div>
<div class="t d" style="left:476px;top:249px;width:71px;text-align:right;color:#000"><i>9</i><i>4</i><i>6</i><i>4</i><i class="z"></i><i>5</i></div>
<div class="t d" style="left:550px;top:249px;color:#000"><i class="z"></i><i class="z"></i><i class="z"></i></div>
<div class="t d" style="left:0px;top:262px;width:47px;text-align:right;color:#000"><i class="o"></i></div>
<div class="t d" style="left:49px;top:262px;width:52px;text-align:right;color:#000"><i>2</i><i class="z"></i><i>2</i></div>
<div class="t d" style="left:103px;top:262px;width:61px;text-align:right;color:#000"><i class="o"></i></div>
<div class="t d" style="left:166px;top:262px;width:55px;text-align:right;color:#000"><i class="o"></i><i>9</i></div>
<div class="t d" style="left:223px;top:262px;width:83px;text-align:right;color:#000"><i class="o"></i><i>2</i><i class="p"></i><i class="z"></i><i>2</i><i class="p"></i><i>2</i><i class="z"></i><i class="o"></i><i>9</i></div>
<div class="t d" style="left:308px;top:262px;width:61px;text-align:right;color:#000"><i>8</i><i class="z"></i><i class="z"></i><i>9</i><i>5</i></div>
<div class="t d" style="left:476px;top:262px;width:71px;text-align:right;color:#000"><i>9</i><i>4</i><i>6</i><i>4</i><i class="z"></i><i>6</i></div>
<div class="t d" style="left:550px;top:262px;color:#000"><i class="z"></i><i class="z"></i><i class="z"></i></div>
<div class="t d" style="left:0px;top:275px;width:47px;text-align:right;color:#000"><i class="o"></i></div>
<div class="t d" style="left:49px;top:275px;width:52px;text-align:right;color:#000"><i>2</i><i class="z"></i><i>2</i></div>
<div class="t d" style="left:103px;top:275px;width:61px;text-align:right;color:#000"><i class="o"></i></div>
<div class="t d" style="left:166px;top:275px;width:55px;text-align:right;color:#000"><i>2</i><i class="z"></i></div>
<div class="t d" style="left:223px;top:275px;width:83px;text-align:right;color:#000"><i class="o"></i><i>2</i><i class="p"></i><i class="z"></i><i>2</i><i class="p"></i><i>2</i><i class="z"></i><i class="o"></i><i>9</i></div>
<div class="t d" style="left:308px;top:275px;width:61px;text-align:right;color:#000"><i>8</i><i class="z"></i><i class="z"></i><i>9</i><i>5</i></div>
<div class="t d" style="left:476px;top:275px;width:71px;text-align:right;color:#000"><i>9</i><i>4</i><i>6</i><i>4</i><i class="z"></i><i>7</i></div>
<div class="t d" style="left:550px;top:275px;color:#000"><i class="z"></i><i class="z"></i><i class="z"></i></div>
<div class="t d" style="left:0px;top:288px;width:47px;text-align:right;color:#000"><i class="o"></i></div>
<div class="t d" style="left:49px;top:288px;width:52px;text-align:right;color:#000"><i>2</i><i class="z"></i><i>2</i></div>
<div class="t d" style="left:103px;top:288px;width:61px;text-align:right;color:#000"><i class="o"></i></div>
<div class="t d" style="left:166px;top:288px;width:55px;text-align:right;color:#000"><i>2</i><i class="o"></i></div>
<div class="t d" style="left:223px;top:288px;width:83px;text-align:right;color:#000"><i class="o"></i><i>2</i><i class="p"></i><i class="z"></i><i>2</i><i class="p"></i><i>2</i><i class="z"></i><i class="o"></i><i>9</i></div>
<div class="t d" style="left:308px;top:288px;width:61px;text-align:right;color:#000"><i>8</i><i class="z"></i><i class="z"></i><i>9</i><i>5</i></div>
<div class="t d" style="left:476px;top:288px;width:71px;text-align:right;color:#000"><i>9</i><i>4</i><i>6</i><i>4</i><i class="z"></i><i>8</i></div>
<div class="t d" style="left:550px;top:288px;color:#000"><i class="z"></i><i class="z"></i><i class="z"></i></div>
<div class="t d" style="left:0px;top:301px;width:47px;text-align:right;color:#000"><i class="o"></i></div>
<div class="t d" style="left:49px;top:301px;width:52px;text-align:right;color:#000"><i>2</i><i class="z"></i><i>2</i></div>
<div class="t d" style="left:103px;top:301px;width:61px;text-align:right;color:#000"><i class="o"></i></div>
<div class="t d" style="left:166px;top:301px;width:55px;text-align:right;color:#000"><i>2</i><i>2</i></div>
<div class="t d" style="left:223px;top:301px;width:83px;text-align:right;color:#000"><i class="o"></i><i>2</i><i class="p"></i><i class="z"></i><i>2</i><i class="p"></i><i>2</i><i class="z"></i><i class="o"></i><i>9</i></div>
<div class="t d" style="left:308px;top:301px;width:61px;text-align:right;color:#000"><i>8</i><i class="z"></i><i class="z"></i><i>9</i><i>5</i></div>
<div class="t d" style="left:476px;top:301px;width:71px;text-align:right;color:#000"><i>9</i><i>4</i><i>6</i><i>4</i><i class="z"></i><i>9</i></div>
<div class="t d" style="left:550px;top:301px;color:#000"><i class="z"></i><i class="z"></i><i class="z"></i></div>
<div style="left:48px;top:0;width:1px;height:315px;background:#a0a0a0"></div>
<div style="left:102px;top:0;width:1px;height:315px;background:#a0a0a0"></div>
<div style="left:165px;top:0;width:1px;height:315px;background:#a0a0a0"></div>
<div style="left:222px;top:0;width:1px;height:315px;background:#a0a0a0"></div>
<div style="left:307px;top:0;width:1px;height:315px;background:#a0a0a0"></div>
<div style="left:370px;top:0;width:1px;height:315px;background:#a0a0a0"></div>
<div style="left:475px;top:0;width:1px;height:315px;background:#a0a0a0"></div>
<div style="left:548px;top:0;width:1px;height:315px;background:#a0a0a0"></div>
</div>
<div style="left:96px;top:610px;width:569px;height:17px;background:#f0f0f0"></div>
<div style="left:96px;top:610px;width:569px;height:1px;background:#a0a0a0"></div>
<div style="left:96px;top:611px;width:19px;height:16px;background:#f0f0f0;border-top:1px solid #fff;border-left:1px solid #fff;border-right:1px solid #696969;border-bottom:1px solid #696969;box-shadow:inset -1px -1px 0 #a0a0a0"></div>
<svg style="left:96px;top:611px" width="19" height="16" viewBox="0 0 19 16"><g fill="#000"><rect x="6" y="4" width="2.2" height="7"/><path d="M14 3.8 L9.6 7.5 L14 11.2Z"/></g></svg>
<div style="left:115px;top:611px;width:19px;height:16px;background:#f0f0f0;border-top:1px solid #fff;border-left:1px solid #fff;border-right:1px solid #696969;border-bottom:1px solid #696969;box-shadow:inset -1px -1px 0 #a0a0a0"></div>
<svg style="left:115px;top:611px" width="19" height="16" viewBox="0 0 19 16"><g fill="#000"><path d="M7.9 3.8 L3.6 7.5 L7.9 11.2Z M14 3.8 L9.7 7.5 L14 11.2Z"/></g></svg>
<div style="left:134px;top:611px;width:19px;height:16px;background:#f0f0f0;border-top:1px solid #fff;border-left:1px solid #fff;border-right:1px solid #696969;border-bottom:1px solid #696969;box-shadow:inset -1px -1px 0 #a0a0a0"></div>
<svg style="left:134px;top:611px" width="19" height="16" viewBox="0 0 19 16"><g fill="#000"><path d="M10 3.8 L5.6 7.5 L10 11.2Z"/></g></svg>
<div style="left:153px;top:611px;width:19px;height:16px;background:#f0f0f0;border-top:1px solid #fff;border-left:1px solid #fff;border-right:1px solid #696969;border-bottom:1px solid #696969;box-shadow:inset -1px -1px 0 #a0a0a0"></div>
<div class="t" style="left:153px;top:614px;width:19px;text-align:center;font-size:11px;line-height:10px;font-weight:bold">?</div>
<div style="left:640px;top:611px;width:25px;height:16px;background:#f0f0f0;border-top:1px solid #fff;border-left:1px solid #fff;border-right:1px solid #696969;border-bottom:1px solid #696969;box-shadow:inset -1px -1px 0 #a0a0a0"></div>
<svg style="left:646px;top:611px" width="19" height="16" viewBox="0 0 19 16"><path d="M9 3.8 L13.2 7.5 L9 11.2Z" fill="#000"/></svg>
<div style="left:104px;top:636px;width:120px;height:22px;background:#f0f0f0;border-top:1px solid #fff;border-left:1px solid #fff;border-right:1px solid #696969;border-bottom:1px solid #696969;box-shadow:inset -1px -1px 0 #a0a0a0"></div>
<div class="t" style="left:121px;top:642px;font-size:11px;line-height:11px;letter-spacing:-0.25px">Unos-šifra</div>
<div style="left:600px;top:636px;width:72px;height:22px;background:#f0f0f0;border-top:1px solid #fff;border-left:1px solid #fff;border-right:1px solid #696969;border-bottom:1px solid #696969;box-shadow:inset -1px -1px 0 #a0a0a0"></div>
<div style="left:652px;top:646px;width:1px;height:4px;background:#505050"></div>
<div style="left:107px;top:681px;width:120px;height:23px;background:#f0f0f0;border-top:1px solid #fff;border-left:1px solid #fff;border-right:1px solid #696969;border-bottom:1px solid #696969;box-shadow:inset -1px -1px 0 #a0a0a0"></div>
<div class="t" style="left:129px;top:688px;font-size:11px;line-height:11px;letter-spacing:-0.25px">Štampa</div>
<div style="left:600px;top:681px;width:72px;height:23px;background:#f0f0f0;border-top:1px solid #fff;border-left:1px solid #fff;border-right:1px solid #696969;border-bottom:1px solid #696969;box-shadow:inset -1px -1px 0 #a0a0a0"></div>
<div style="left:691px;top:259px;width:165px;height:386px;background:#f0f0f0;border-top:1px solid #fff;border-left:1px solid #fff;border-right:1px solid #696969;border-bottom:1px solid #696969;box-shadow:inset -1px -1px 0 #a0a0a0"></div>
<div style="left:692px;top:235px;width:46px;height:25px;background:#f0f0f0;border-top:1px solid #fff;border-left:1px solid #fff;border-right:1px solid #696969;box-shadow:inset -1px 0 0 #a0a0a0"></div>
<div class="t" style="left:696px;top:241px;font-size:11px;line-height:11px;-webkit-text-stroke:0.15px currentColor">Podaci</div>
<div class="t" style="left:692px;top:262px;font-size:11px;line-height:11px;letter-spacing:-0.15px;-webkit-text-stroke:0.15px currentColor">Brojači trebovanja</div>
<div style="left:699px;top:281px;width:147px;height:364px;background:#fff;border-top:2px solid #6e6e6e;border-left:2px solid #6e6e6e"></div>
<div style="left:701px;top:283px;width:30px;height:15px;background:#f0f0f0;border-top:1px solid #fff;border-left:1px solid #fff;border-right:1px solid #696969;border-bottom:1px solid #696969;box-shadow:inset -1px -1px 0 #a0a0a0"></div>
<div class="t" style="left:702px;top:284px;width:28px;font-size:12px;line-height:12px;overflow:hidden;white-space:nowrap;letter-spacing:-0.45px;-webkit-text-stroke:0.1px currentColor">Pred.</div>
<div style="left:731px;top:283px;width:33px;height:15px;background:#f0f0f0;border-top:1px solid #fff;border-left:1px solid #fff;border-right:1px solid #696969;border-bottom:1px solid #696969;box-shadow:inset -1px -1px 0 #a0a0a0"></div>
<div class="t" style="left:735px;top:284px;width:28px;font-size:12px;line-height:12px;overflow:hidden;white-space:nowrap;letter-spacing:-0.45px;-webkit-text-stroke:0.1px currentColor">Rj</div>
<div style="left:764px;top:283px;width:82px;height:15px;background:#f0f0f0;border-top:1px solid #fff;border-left:1px solid #fff;border-right:1px solid #696969;border-bottom:1px solid #696969;box-shadow:inset -1px -1px 0 #a0a0a0"></div>
<div class="t" style="left:766px;top:284px;width:79px;font-size:12px;line-height:12px;overflow:hidden;white-space:nowrap;letter-spacing:-0.45px;-webkit-text-stroke:0.1px currentColor">Broj trebovanja</div>
<div style="left:701px;top:298px;width:145px;height:330px;overflow:hidden">
<div style="left:0;top:0px;width:145px;height:13px;background:#3399ff"></div>
<div class="t d" style="left:0;top:2px;width:30px;height:12px;overflow:hidden;color:#fff"><span style="position:absolute;right:-1px"><i class="o"></i></span></div>
<div class="t d" style="left:30px;top:2px;width:33px;height:12px;overflow:hidden;color:#fff"><span style="position:absolute;right:-1px"><i class="o"></i><i class="o"></i><i class="o"></i></span></div>
<div class="t d" style="left:63px;top:2px;width:82px;height:12px;overflow:hidden;color:#fff"><span style="position:absolute;right:0px"><i>2</i></span></div>
<div class="t d" style="left:0;top:15px;width:30px;height:12px;overflow:hidden;color:#000"><span style="position:absolute;right:-1px"><i class="o"></i></span></div>
<div class="t d" style="left:30px;top:15px;width:33px;height:12px;overflow:hidden;color:#000"><span style="position:absolute;right:-1px"><i class="o"></i><i class="o"></i><i>3</i></span></div>
<div class="t d" style="left:63px;top:15px;width:82px;height:12px;overflow:hidden;color:#000"><span style="position:absolute;right:0px"><i class="z"></i></span></div>
<div class="t d" style="left:0;top:28px;width:30px;height:12px;overflow:hidden;color:#000"><span style="position:absolute;right:-1px"><i class="o"></i></span></div>
<div class="t d" style="left:30px;top:28px;width:33px;height:12px;overflow:hidden;color:#000"><span style="position:absolute;right:-1px"><i>2</i><i class="z"></i><i>2</i></span></div>
<div class="t d" style="left:63px;top:28px;width:82px;height:12px;overflow:hidden;color:#000"><span style="position:absolute;right:0px"><i class="o"></i></span></div>
<div class="t d" style="left:0;top:41px;width:30px;height:12px;overflow:hidden;color:#000"><span style="position:absolute;right:-1px"><i class="o"></i></span></div>
<div class="t d" style="left:30px;top:41px;width:33px;height:12px;overflow:hidden;color:#000"><span style="position:absolute;right:-1px"><i>2</i><i class="z"></i><i>4</i></span></div>
<div class="t d" style="left:63px;top:41px;width:82px;height:12px;overflow:hidden;color:#000"><span style="position:absolute;right:0px"><i class="z"></i></span></div>
<div class="t d" style="left:0;top:54px;width:30px;height:12px;overflow:hidden;color:#000"><span style="position:absolute;right:-1px"><i class="o"></i></span></div>
<div class="t d" style="left:30px;top:54px;width:33px;height:12px;overflow:hidden;color:#000"><span style="position:absolute;right:-1px"><i>2</i><i class="o"></i><i class="z"></i></span></div>
<div class="t d" style="left:63px;top:54px;width:82px;height:12px;overflow:hidden;color:#000"><span style="position:absolute;right:0px"><i class="z"></i></span></div>
<div class="t d" style="left:0;top:67px;width:30px;height:12px;overflow:hidden;color:#000"><span style="position:absolute;right:-1px"><i class="o"></i></span></div>
<div class="t d" style="left:30px;top:67px;width:33px;height:12px;overflow:hidden;color:#000"><span style="position:absolute;right:-1px"><i>2</i><i class="o"></i><i class="o"></i></span></div>
<div class="t d" style="left:63px;top:67px;width:82px;height:12px;overflow:hidden;color:#000"><span style="position:absolute;right:0px"><i class="z"></i></span></div>
<div class="t d" style="left:0;top:80px;width:30px;height:12px;overflow:hidden;color:#000"><span style="position:absolute;right:-1px"><i class="o"></i></span></div>
<div class="t d" style="left:30px;top:80px;width:33px;height:12px;overflow:hidden;color:#000"><span style="position:absolute;right:-1px"><i>2</i><i class="o"></i><i>4</i></span></div>
<div class="t d" style="left:63px;top:80px;width:82px;height:12px;overflow:hidden;color:#000"><span style="position:absolute;right:0px"><i class="z"></i></span></div>
<div class="t d" style="left:0;top:93px;width:30px;height:12px;overflow:hidden;color:#000"><span style="position:absolute;right:-1px"><i class="o"></i></span></div>
<div class="t d" style="left:30px;top:93px;width:33px;height:12px;overflow:hidden;color:#000"><span style="position:absolute;right:-1px"><i>3</i><i class="z"></i><i class="o"></i></span></div>
<div class="t d" style="left:63px;top:93px;width:82px;height:12px;overflow:hidden;color:#000"><span style="position:absolute;right:0px"><i class="z"></i></span></div>
<div class="t d" style="left:0;top:106px;width:30px;height:12px;overflow:hidden;color:#000"><span style="position:absolute;right:-1px"><i class="o"></i></span></div>
<div class="t d" style="left:30px;top:106px;width:33px;height:12px;overflow:hidden;color:#000"><span style="position:absolute;right:-1px"><i>3</i><i class="o"></i><i class="z"></i></span></div>
<div class="t d" style="left:63px;top:106px;width:82px;height:12px;overflow:hidden;color:#000"><span style="position:absolute;right:0px"><i class="z"></i></span></div>
<div class="t d" style="left:0;top:119px;width:30px;height:12px;overflow:hidden;color:#000"><span style="position:absolute;right:-1px"><i class="o"></i></span></div>
<div class="t d" style="left:30px;top:119px;width:33px;height:12px;overflow:hidden;color:#000"><span style="position:absolute;right:-1px"><i>3</i><i>2</i><i class="z"></i></span></div>
<div class="t d" style="left:63px;top:119px;width:82px;height:12px;overflow:hidden;color:#000"><span style="position:absolute;right:0px"><i class="z"></i></span></div>
<div class="t d" style="left:0;top:132px;width:30px;height:12px;overflow:hidden;color:#000"><span style="position:absolute;right:-1px"><i class="o"></i></span></div>
<div class="t d" style="left:30px;top:132px;width:33px;height:12px;overflow:hidden;color:#000"><span style="position:absolute;right:-1px"><i>5</i><i class="o"></i><i class="z"></i></span></div>
<div class="t d" style="left:63px;top:132px;width:82px;height:12px;overflow:hidden;color:#000"><span style="position:absolute;right:0px"><i class="z"></i></span></div>
<div class="t d" style="left:0;top:145px;width:30px;height:12px;overflow:hidden;color:#000"><span style="position:absolute;right:-1px"><i class="o"></i></span></div>
<div class="t d" style="left:30px;top:145px;width:33px;height:12px;overflow:hidden;color:#000"><span style="position:absolute;right:-1px"><i>5</i><i>6</i><i>2</i></span></div>
<div class="t d" style="left:63px;top:145px;width:82px;height:12px;overflow:hidden;color:#000"><span style="position:absolute;right:0px"><i class="z"></i></span></div>
<div class="t d" style="left:0;top:158px;width:30px;height:12px;overflow:hidden;color:#000"><span style="position:absolute;right:-1px"><i class="o"></i></span></div>
<div class="t d" style="left:30px;top:158px;width:33px;height:12px;overflow:hidden;color:#000"><span style="position:absolute;right:-1px"><i>5</i><i>7</i><i class="z"></i></span></div>
<div class="t d" style="left:63px;top:158px;width:82px;height:12px;overflow:hidden;color:#000"><span style="position:absolute;right:0px"><i class="z"></i></span></div>
<div class="t d" style="left:0;top:171px;width:30px;height:12px;overflow:hidden;color:#000"><span style="position:absolute;right:-1px"><i class="o"></i></span></div>
<div class="t d" style="left:30px;top:171px;width:33px;height:12px;overflow:hidden;color:#000"><span style="position:absolute;right:-1px"><i>7</i><i class="z"></i><i>3</i></span></div>
<div class="t d" style="left:63px;top:171px;width:82px;height:12px;overflow:hidden;color:#000"><span style="position:absolute;right:0px"><i class="z"></i></span></div>
<div class="t d" style="left:0;top:184px;width:30px;height:12px;overflow:hidden;color:#000"><span style="position:absolute;right:-1px"><i class="o"></i></span></div>
<div class="t d" style="left:30px;top:184px;width:33px;height:12px;overflow:hidden;color:#000"><span style="position:absolute;right:-1px"><i>7</i><i>5</i><i>4</i></span></div>
<div class="t d" style="left:63px;top:184px;width:82px;height:12px;overflow:hidden;color:#000"><span style="position:absolute;right:0px"><i class="z"></i></span></div>
<div class="t d" style="left:0;top:197px;width:30px;height:12px;overflow:hidden;color:#000"><span style="position:absolute;right:-1px"><i class="o"></i></span></div>
<div class="t d" style="left:30px;top:197px;width:33px;height:12px;overflow:hidden;color:#000"><span style="position:absolute;right:-1px"><i>7</i><i>5</i><i>5</i></span></div>
<div class="t d" style="left:63px;top:197px;width:82px;height:12px;overflow:hidden;color:#000"><span style="position:absolute;right:0px"><i class="z"></i></span></div>
<div class="t d" style="left:0;top:210px;width:30px;height:12px;overflow:hidden;color:#000"><span style="position:absolute;right:-1px"><i class="o"></i></span></div>
<div class="t d" style="left:30px;top:210px;width:33px;height:12px;overflow:hidden;color:#000"><span style="position:absolute;right:-1px"><i>7</i><i>7</i><i class="z"></i></span></div>
<div class="t d" style="left:63px;top:210px;width:82px;height:12px;overflow:hidden;color:#000"><span style="position:absolute;right:0px"><i class="z"></i></span></div>
<div class="t d" style="left:0;top:223px;width:30px;height:12px;overflow:hidden;color:#000"><span style="position:absolute;right:-1px"><i class="o"></i></span></div>
<div class="t d" style="left:30px;top:223px;width:33px;height:12px;overflow:hidden;color:#000"><span style="position:absolute;right:-1px"><i>7</i><i>7</i><i>2</i></span></div>
<div class="t d" style="left:63px;top:223px;width:82px;height:12px;overflow:hidden;color:#000"><span style="position:absolute;right:0px"><i class="z"></i></span></div>
<div class="t d" style="left:0;top:236px;width:30px;height:12px;overflow:hidden;color:#000"><span style="position:absolute;right:-1px"><i class="o"></i></span></div>
<div class="t d" style="left:30px;top:236px;width:33px;height:12px;overflow:hidden;color:#000"><span style="position:absolute;right:-1px"><i>7</i><i>7</i><i>5</i></span></div>
<div class="t d" style="left:63px;top:236px;width:82px;height:12px;overflow:hidden;color:#000"><span style="position:absolute;right:0px"><i class="z"></i></span></div>
<div class="t d" style="left:0;top:249px;width:30px;height:12px;overflow:hidden;color:#000"><span style="position:absolute;right:-1px"><i class="o"></i></span></div>
<div class="t d" style="left:30px;top:249px;width:33px;height:12px;overflow:hidden;color:#000"><span style="position:absolute;right:-1px"><i>7</i><i>7</i><i>6</i></span></div>
<div class="t d" style="left:63px;top:249px;width:82px;height:12px;overflow:hidden;color:#000"><span style="position:absolute;right:0px"><i class="z"></i></span></div>
<div class="t d" style="left:0;top:262px;width:30px;height:12px;overflow:hidden;color:#000"><span style="position:absolute;right:-1px"><i class="o"></i></span></div>
<div class="t d" style="left:30px;top:262px;width:33px;height:12px;overflow:hidden;color:#000"><span style="position:absolute;right:-1px"><i>8</i><i>5</i><i class="z"></i></span></div>
<div class="t d" style="left:63px;top:262px;width:82px;height:12px;overflow:hidden;color:#000"><span style="position:absolute;right:0px"><i class="o"></i></span></div>
<div style="left:29px;top:0;width:1px;height:330px;background:#a0a0a0"></div>
<div style="left:62px;top:0;width:1px;height:330px;background:#a0a0a0"></div>
</div>
<div style="left:701px;top:628px;width:145px;height:17px;background:#c8c8c8"></div>
<div style="left:701px;top:628px;width:145px;height:1px;background:#a0a0a0"></div>
<div style="left:701px;top:629px;width:19px;height:16px;background:#f0f0f0;border-top:1px solid #fff;border-left:1px solid #fff;border-right:1px solid #696969;border-bottom:1px solid #696969;box-shadow:inset -1px -1px 0 #a0a0a0"></div>
<svg style="left:701px;top:629px" width="19" height="16" viewBox="0 0 19 16"><g fill="#000"><rect x="6" y="4" width="2.2" height="7"/><path d="M14 3.8 L9.6 7.5 L14 11.2Z"/></g></svg>
<div style="left:720px;top:629px;width:19px;height:16px;background:#f0f0f0;border-top:1px solid #fff;border-left:1px solid #fff;border-right:1px solid #696969;border-bottom:1px solid #696969;box-shadow:inset -1px -1px 0 #a0a0a0"></div>
<svg style="left:720px;top:629px" width="19" height="16" viewBox="0 0 19 16"><g fill="#000"><path d="M7.9 3.8 L3.6 7.5 L7.9 11.2Z M14 3.8 L9.7 7.5 L14 11.2Z"/></g></svg>
<div style="left:739px;top:629px;width:19px;height:16px;background:#f0f0f0;border-top:1px solid #fff;border-left:1px solid #fff;border-right:1px solid #696969;border-bottom:1px solid #696969;box-shadow:inset -1px -1px 0 #a0a0a0"></div>
<svg style="left:739px;top:629px" width="19" height="16" viewBox="0 0 19 16"><g fill="#000"><path d="M10 3.8 L5.6 7.5 L10 11.2Z"/></g></svg>
<div style="left:758px;top:629px;width:19px;height:16px;background:#f0f0f0;border-top:1px solid #fff;border-left:1px solid #fff;border-right:1px solid #696969;border-bottom:1px solid #696969;box-shadow:inset -1px -1px 0 #a0a0a0"></div>
<div class="t" style="left:758px;top:632px;width:19px;text-align:center;font-size:11px;line-height:10px;font-weight:bold">?</div>
<div style="left:777px;top:629px;width:19px;height:16px;background:#f0f0f0;border-top:1px solid #fff;border-left:1px solid #fff;border-right:1px solid #696969;border-bottom:1px solid #696969;box-shadow:inset -1px -1px 0 #a0a0a0"></div>
<svg style="left:777px;top:629px" width="19" height="16" viewBox="0 0 19 16"><g fill="#000"><path d="M7 3.8 L11.2 7.5 L7 11.2Z"/></g></svg>
<div style="left:796px;top:629px;width:19px;height:16px;background:#f0f0f0;border-top:1px solid #fff;border-left:1px solid #fff;border-right:1px solid #696969;border-bottom:1px solid #696969;box-shadow:inset -1px -1px 0 #a0a0a0"></div>
<svg style="left:796px;top:629px" width="19" height="16" viewBox="0 0 19 16"><g fill="#000"><path d="M4 3.8 L8.3 7.5 L4 11.2Z M10 3.8 L14.3 7.5 L10 11.2Z"/></g></svg>
<div style="left:815px;top:629px;width:19px;height:16px;background:#f0f0f0;border-top:1px solid #fff;border-left:1px solid #fff;border-right:1px solid #696969;border-bottom:1px solid #696969;box-shadow:inset -1px -1px 0 #a0a0a0"></div>
<svg style="left:815px;top:629px" width="19" height="16" viewBox="0 0 19 16"><g fill="#000"><path d="M4.7 3.8 L9.1 7.5 L4.7 11.2Z"/><rect x="11" y="4" width="2.2" height="7"/></g></svg>
<div style="left:715px;top:648px;width:131px;height:23px;background:#f0f0f0;border-top:1px solid #fff;border-left:1px solid #fff;border-right:1px solid #696969;border-bottom:1px solid #696969;box-shadow:inset -1px -1px 0 #a0a0a0"></div>
<div class="t" style="left:727px;top:655px;font-size:11px;line-height:11px;">Uvećanje brojača za 1</div>
<div style="left:715px;top:677px;width:131px;height:23px;background:#f0f0f0;border-top:1px solid #fff;border-left:1px solid #fff;border-right:1px solid #696969;border-bottom:1px solid #696969;box-shadow:inset -1px -1px 0 #a0a0a0"></div>
<div class="t" style="left:725px;top:684px;font-size:11px;line-height:11px;">Umanjenje brojača za 1</div>
<div style="left:170px;top:478px;width:482px;height:309px;border:1px solid #1c2430;border-radius:5px 5px 0 0;background:#f0f0f0"></div>
<div style="left:171px;top:479px;width:480px;height:25px;border-radius:4px 4px 0 0;background:linear-gradient(#9ab5d5,#a8c2de 40%,#b6cee8 80%,#bad2eb);box-shadow:inset 0 1px 0 #c4d6ea"></div>
<div style="left:171px;top:504px;width:1px;height:282px;background:#fff"></div>
<div style="left:649px;top:504px;width:2px;height:282px;background:linear-gradient(90deg,#cfe6f4,#7cc0e4)"></div>
<div style="left:650px;top:479px;width:1px;height:25px;background:#a8cfe8"></div>
<div style="left:172px;top:504px;width:1px;height:281px;background:#e2eaf4"></div>
<div style="left:171px;top:785px;width:480px;height:1px;background:#80d4ee"></div>
<svg style="left:172px;top:482px;opacity:1" width="22" height="20" viewBox="0 0 22 20">
<g fill="#b4def6" stroke="#1d4a6b" stroke-width="1.25" stroke-linejoin="miter">
<path d="M11.4 4 L15.7 11.4 L11.6 11.4 L9.3 7.4 Z"/>
<path d="M8.4 9.3 L9.7 11.9 L8.2 16.4 L3.7 16.4 Z"/>
<path d="M11.4 13.6 L16.6 13.6 L18.7 16.4 L10.4 16.4 Z"/>
</g>
</svg>
<div class="t" style="left:195px;top:487px;font-size:12px;line-height:12px;color:#0a0a1a;letter-spacing:-0.25px;-webkit-text-stroke:0">Trebovanje za Rj</div>
<div style="left:615px;top:483px;width:32px;height:18px;border:1px solid #3a1010;border-radius:3px;background:linear-gradient(#eaa090 0,#e29080 45%,#c8452a 50%,#d0583e 80%,#e6907a 100%);box-shadow:inset 0 0 0 1px rgba(255,220,210,.6)"></div>
<svg style="left:622px;top:485px" width="16" height="13" viewBox="0 0 16 13">
<path d="M4.8 4 L11.6 8.6 M11.6 4 L4.8 8.6" stroke="#3a1a14" stroke-width="4" stroke-linecap="round"/>
<path d="M4.8 4 L11.6 8.6 M11.6 4 L4.8 8.6" stroke="#fff" stroke-width="2.2" stroke-linecap="round"/>
</svg>
<div class="t" style="left:97px;top:511px;width:150px;text-align:right;font-size:11px;line-height:11px">Preduzeæe:</div>
<div style="left:247px;top:508px;width:39px;height:19px;background:#ffff70;border-top:2px solid #7a7a7a;border-left:2px solid #7a7a7a;border-right:1px solid #fff;border-bottom:1px solid #fff;box-shadow:1px 1px 0 #e3e3e3"></div>
<div style="left:271px;top:511px;width:10px;height:15px;background:#2f93f5;border:1px solid #205a90;border-right:1px solid #3a2a10"></div>
<div class="t" style="left:272px;top:514px;width:9px;text-align:center;font-size:11px;line-height:11px;color:#fff">0</div>
<div style="left:301px;top:508px;width:18px;height:19px;background:#f0f0f0;border-top:1px solid #fff;border-left:1px solid #fff;border-right:1px solid #696969;border-bottom:1px solid #696969;box-shadow:inset -1px -1px 0 #a0a0a0"></div>
<div class="t" style="left:301px;top:512px;width:18px;text-align:center;font-size:11px;line-height:11px">...</div>
<div class="t" style="left:91px;top:533px;width:150px;text-align:right;font-size:11px;line-height:11px">R.jedinica:</div>
<div style="left:247px;top:531px;width:45px;height:19px;background:#fff;border-top:2px solid #7a7a7a;border-left:2px solid #7a7a7a;border-right:1px solid #fff;border-bottom:1px solid #fff;box-shadow:1px 1px 0 #e3e3e3"></div>
<div class="t" style="left:247px;top:536px;width:39px;text-align:right;font-size:11px;line-height:11px">0</div>
<div style="left:302px;top:530px;width:18px;height:21px;background:#f0f0f0;border-top:1px solid #fff;border-left:1px solid #fff;border-right:1px solid #696969;border-bottom:1px solid #696969;box-shadow:inset -1px -1px 0 #a0a0a0"></div>
<div class="t" style="left:302px;top:535px;width:18px;text-align:center;font-size:11px;line-height:11px">...</div>
<div class="t" style="left:157px;top:557px;width:150px;text-align:right;font-size:11px;line-height:11px"><u>B</u>roj trebovanja:</div>
<div style="left:313px;top:554px;width:65px;height:19px;background:#fff;border-top:2px solid #7a7a7a;border-left:2px solid #7a7a7a;border-right:1px solid #fff;border-bottom:1px solid #fff;box-shadow:1px 1px 0 #e3e3e3"></div>
<div class="t" style="left:313px;top:559px;width:60px;text-align:right;font-size:11px;line-height:11px">0</div>
<div class="t" style="left:157px;top:580px;width:150px;text-align:right;font-size:11px;line-height:11px">Datum:</div>
<div style="left:313px;top:577px;width:64px;height:19px;background:#fff;border-top:2px solid #7a7a7a;border-left:2px solid #7a7a7a;border-right:1px solid #fff;border-bottom:1px solid #fff;box-shadow:1px 1px 0 #e3e3e3"></div>
<div class="t" style="left:157px;top:606px;width:150px;text-align:right;font-size:11px;line-height:11px">Napomena:</div>
<div style="left:313px;top:605px;width:324px;height:68px;background:#fff;border-top:2px solid #7a7a7a;border-left:2px solid #7a7a7a;border-right:1px solid #fff;border-bottom:1px solid #fff;box-shadow:1px 1px 0 #e3e3e3"></div>
<div style="left:182px;top:683px;width:458px;height:1px;background:#222"></div>
<div style="left:182px;top:684px;width:458px;height:1px;background:#fff"></div>
<div class="t" style="left:172px;top:695px;width:150px;text-align:right;font-size:11px;line-height:11px">Redni broj:</div>
<div style="left:333px;top:692px;width:58px;height:19px;background:#fff;border-top:2px solid #7a7a7a;border-left:2px solid #7a7a7a;border-right:1px solid #fff;border-bottom:1px solid #fff;box-shadow:1px 1px 0 #e3e3e3"></div>
<div class="t" style="left:333px;top:697px;width:52px;text-align:right;font-size:11px;line-height:11px">0</div>
<div class="t" style="left:174px;top:718px;width:150px;text-align:right;font-size:11px;line-height:11px">Šifra artikla:</div>
<div style="left:333px;top:715px;width:58px;height:19px;background:#fff;border-top:2px solid #7a7a7a;border-left:2px solid #7a7a7a;border-right:1px solid #fff;border-bottom:1px solid #fff;box-shadow:1px 1px 0 #e3e3e3"></div>
<div class="t" style="left:333px;top:721px;width:52px;text-align:right;font-size:11px;line-height:11px">0</div>
<div style="left:400px;top:716px;width:18px;height:19px;background:#f0f0f0;border-top:1px solid #fff;border-left:1px solid #fff;border-right:1px solid #696969;border-bottom:1px solid #696969;box-shadow:inset -1px -1px 0 #a0a0a0"></div>
<div class="t" style="left:400px;top:719px;width:18px;text-align:center;font-size:11px;line-height:11px">...</div>
<div class="t" style="left:172px;top:738px;width:150px;text-align:right;font-size:11px;line-height:11px"><u>K</u>olièina:</div>
<div style="left:333px;top:737px;width:96px;height:19px;background:#fff;border-top:2px solid #7a7a7a;border-left:2px solid #7a7a7a;border-right:1px solid #fff;border-bottom:1px solid #fff;box-shadow:1px 1px 0 #e3e3e3"></div>
<div class="t" style="left:333px;top:741px;width:86px;text-align:right;font-size:11px;line-height:11px">0,000</div>
<div style="left:333px;top:757px;width:33px;height:19px;background:#fff;border-top:2px solid #7a7a7a;border-left:2px solid #7a7a7a;border-right:1px solid #fff;border-bottom:1px solid #fff;box-shadow:1px 1px 0 #e3e3e3"></div>
</body></html>
